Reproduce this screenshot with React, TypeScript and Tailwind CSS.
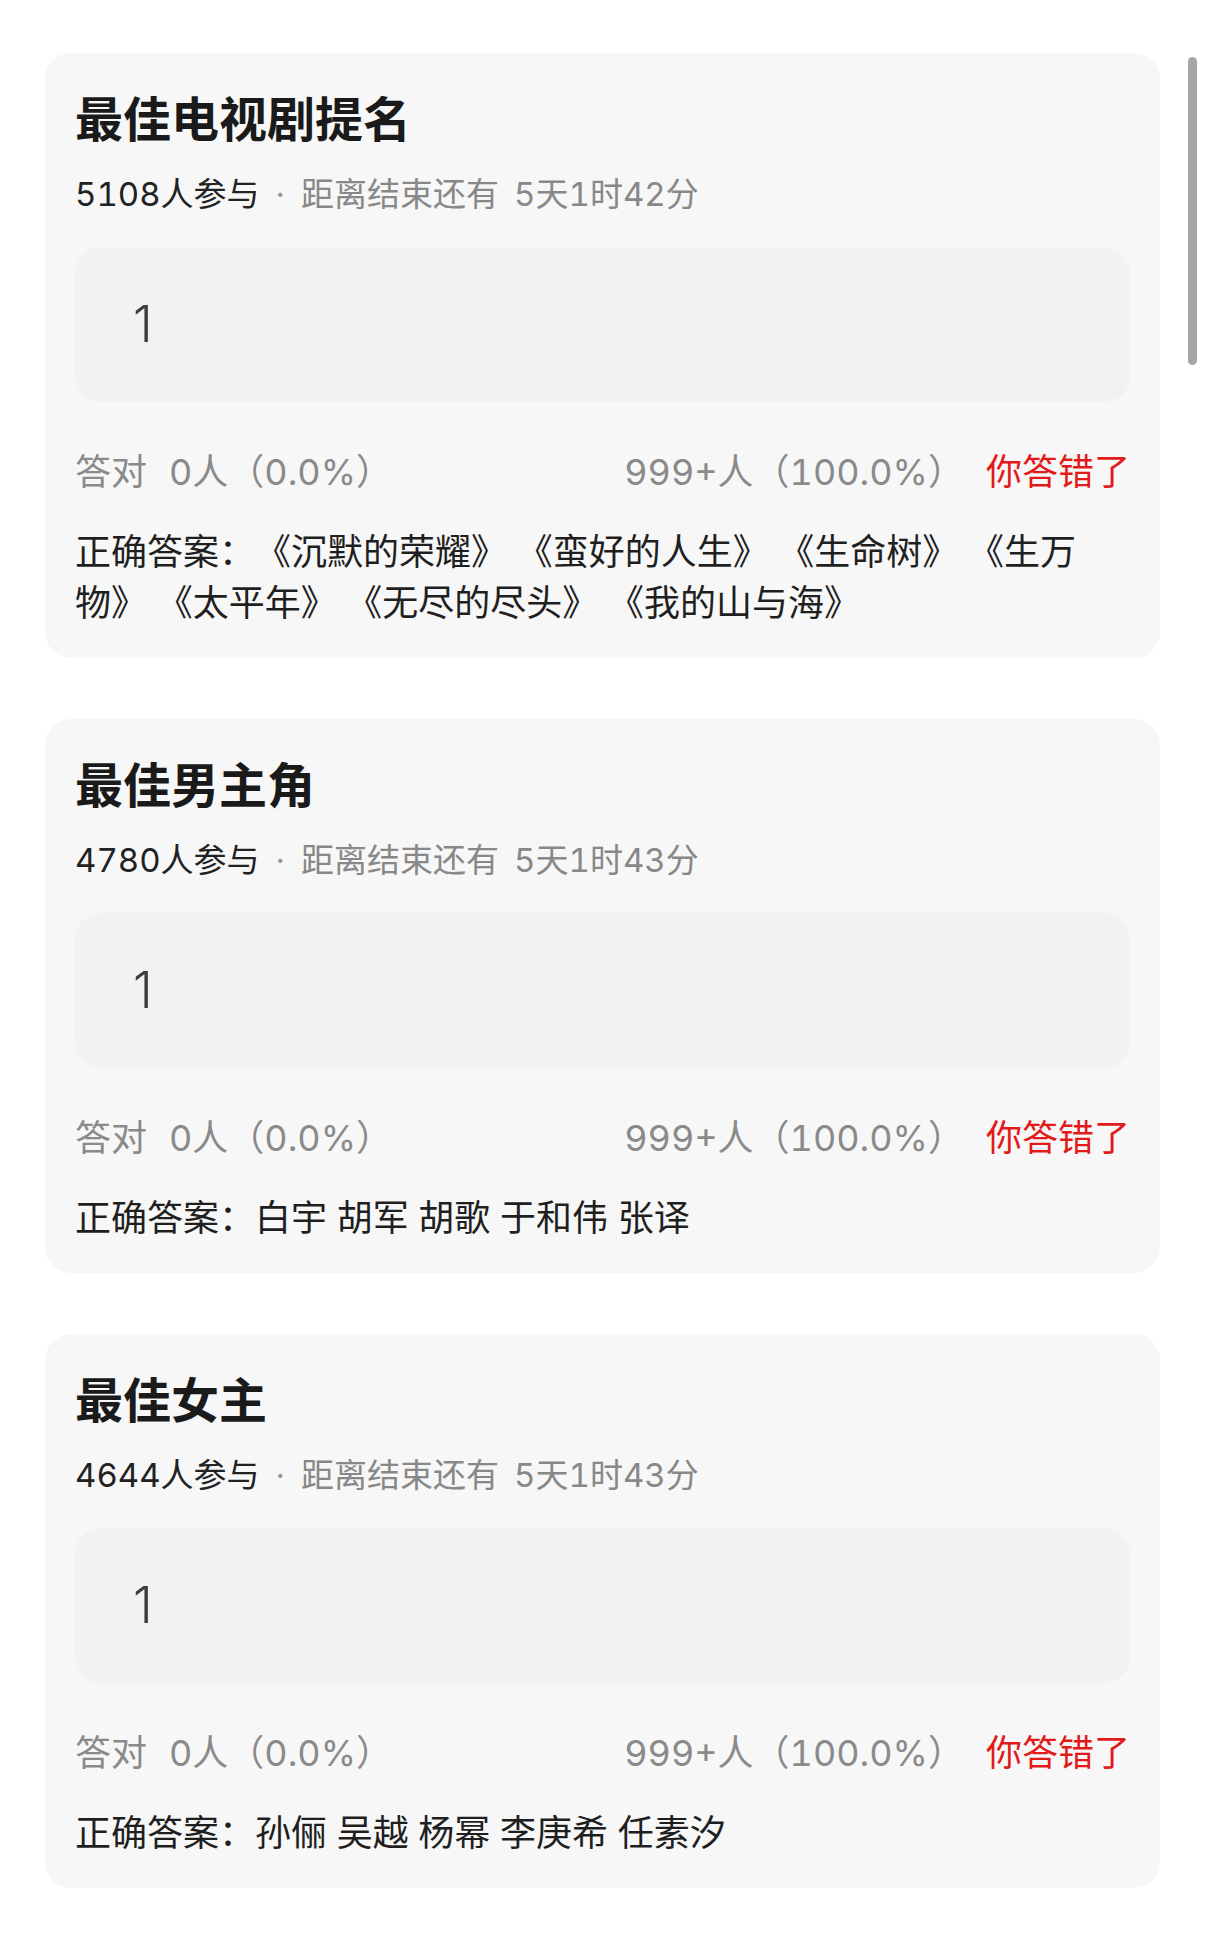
import React from 'react';

type Award = {
  title: string;
  joined: number;
  remain: string;
  answer: string;
};

const AWARDS: Award[] = [
  {
    title: '最佳电视剧提名',
    joined: 5108,
    remain: '5天1时42分',
    answer: '《沉默的荣耀》 《蛮好的人生》 《生命树》 《生万物》 《太平年》 《无尽的尽头》 《我的山与海》',
  },
  {
    title: '最佳男主角',
    joined: 4780,
    remain: '5天1时43分',
    answer: '白宇 胡军 胡歌 于和伟 张译',
  },
  {
    title: '最佳女主',
    joined: 4644,
    remain: '5天1时43分',
    answer: '孙俪 吴越 杨幂 李庚希 任素汐',
  },
];

const FONT = { fontFamily: 'Inter, "Noto Sans CJK SC", sans-serif' };

function AwardCard({ award }: { award: Award }) {
  return (
    <section className="rounded-[26px] bg-[#f7f7f7] px-[30px] pt-[39px] pb-[29px]">
      <h2 className="text-[48px] leading-[56px] font-bold text-[#1a1a1a]">{award.title}</h2>

      <p className="mt-[24px] flex items-center text-[33px] leading-[44px]">
        <span className="text-[#222]">{award.joined}人参与</span>
        <span className="mx-4 text-[#999]">·</span>
        <span className="text-[#888]">距离结束还有</span>
        <span className="ml-[15px] text-[#888]">{award.remain}</span>
      </p>

      <div className="mt-[31px] flex h-[155px] items-center rounded-[26px] bg-[#f2f2f2] pl-[58px]">
        <span className="text-[50px] font-light text-[#3d3d3d] [font-feature-settings:normal]">1</span>
      </div>

      <div className="mt-[45px] flex items-center justify-between text-[36px] leading-[50px]">
        <div className="flex text-[#8a8a8a]">
          <span>答对</span>
          <span className="ml-[22px]">0人（0.0%）</span>
        </div>
        <div className="flex">
          <span className="text-[#8a8a8a]">999+人（100.0%）</span>
          <span className="ml-[22px] text-[#e21a1a]">你答错了</span>
        </div>
      </div>

      <p className="mt-[30px] text-[36px] leading-[51px] text-[#1f1f1f]">
        正确答案：{award.answer}
      </p>
    </section>
  );
}

export default function App() {
  return (
    <div
      className="relative min-h-[1945px] w-full bg-white [font-feature-settings:'tnum'] [text-spacing-trim:space-all]"
      style={FONT}
    >
      <div className="flex flex-col gap-[61px] pt-[53px] pl-[45px] pr-[46px]">
        {AWARDS.map((a) => (
          <AwardCard key={a.title} award={a} />
        ))}
      </div>
      {/* scroll indicator */}
      <div className="absolute top-[57px] left-[1188px] h-[308px] w-[9px] rounded-full bg-[#a6a6a6]" />
    </div>
  );
}
